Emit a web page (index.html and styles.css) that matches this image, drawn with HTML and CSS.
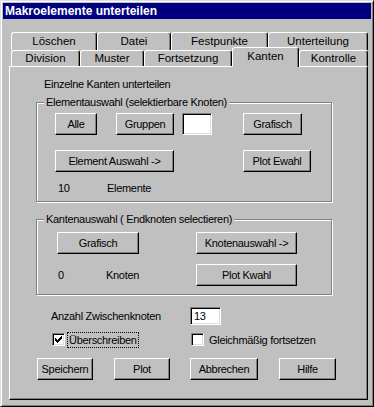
FILE: index.html
```html
<!DOCTYPE html>
<html lang="de">
<head>
    <meta charset="UTF-8">
    <meta name="viewport" content="width=device-width, initial-scale=1.0">
    <title>Makroelemente unterteilen</title>
    <link rel="stylesheet" href="styles.css">
</head>
<body>
    <div class="window">
        <div class="titlebar">Makroelemente unterteilen</div>

        <div class="tab-row back">
            <div class="tab t-loeschen">Löschen</div>
            <div class="tab t-datei">Datei</div>
            <div class="tab t-fest">Festpunkte</div>
            <div class="tab t-unter">Unterteilung</div>
        </div>
        <div class="tab-row front">
            <div class="tab t-division">Division</div>
            <div class="tab t-muster">Muster</div>
            <div class="tab t-fort">Fortsetzung</div>
            <div class="tab t-kanten active">Kanten</div>
            <div class="tab t-kontrolle">Kontrolle</div>
        </div>

        <div class="panel">
            <div class="heading">Einzelne Kanten unterteilen</div>

            <div class="group group-elem">
                <div class="legend">Elementauswahl (selektierbare Knoten)</div>
                <div class="row elem-a">
                    <button class="btn b-alle">Alle</button>
                    <button class="btn b-gruppen">Gruppen</button>
                    <div class="field f-gruppe"></div>
                    <button class="btn b-grafisch1">Grafisch</button>
                </div>
                <div class="row elem-b">
                    <button class="btn b-elemwahl">Element Auswahl -&gt;</button>
                    <button class="btn b-plotewahl">Plot Ewahl</button>
                </div>
                <div class="row elem-c">
                    <span class="count c-elem">10</span>
                    <span>Elemente</span>
                </div>
            </div>

            <div class="group group-kant">
                <div class="legend">Kantenauswahl ( Endknoten selectieren)</div>
                <div class="row kant-a">
                    <button class="btn b-grafisch2">Grafisch</button>
                    <button class="btn b-knotwahl">Knotenauswahl -&gt;</button>
                </div>
                <div class="row kant-b">
                    <span class="count c-knot">0</span>
                    <span class="knot-label">Knoten</span>
                    <button class="btn b-plotkwahl">Plot Kwahl</button>
                </div>
            </div>

            <div class="row anzahl">
                <span class="anzahl-label">Anzahl Zwischenknoten</span>
                <div class="field f-anzahl">13</div>
            </div>

            <div class="row checks">
                <div class="check-item first">
                    <span class="checkbox">
                        <svg width="7" height="7" viewBox="0 0 7 7"><path d="M0 2h1v3h-1z M1 3h1v3h-1z M2 4h1v3h-1z M3 3h1v3h-1z M4 2h1v3h-1z M5 1h1v3h-1z M6 0h1v3h-1z" fill="#000"/></svg>
                    </span>
                    <span class="check-label focused">Überschreiben</span>
                </div>
                <div class="check-item">
                    <span class="checkbox"></span>
                    <span class="check-label">Gleichmäßig fortsetzen</span>
                </div>
            </div>

            <div class="row actions">
                <button class="btn b-speichern">Speichern</button>
                <button class="btn b-plot">Plot</button>
                <button class="btn b-abbrechen">Abbrechen</button>
                <button class="btn b-hilfe">Hilfe</button>
            </div>
        </div>
    </div>
</body>
</html>
```

FILE: styles.css
```css
* {
    box-sizing: border-box;
}
body {
    margin: 0;
    background-color: #c0c0c0;
    font-family: "Liberation Sans", Arial, sans-serif;
    font-size: 11px;
    color: #000;
}
.window {
    width: 374px;
    height: 407px;
    padding: 2px;
    background-color: #c0c0c0;
    border: 1px solid;
    border-color: #dfdfdf #000 #000 #dfdfdf;
    box-shadow: inset 1px 1px 0 #fff, inset -1px -1px 0 #808080;
}
.titlebar {
    height: 16px;
    padding-left: 2px;
    background-color: #000080;
    color: #fff;
    font-weight: bold;
    font-size: 12px;
    line-height: 16px;
}

/* tabs */
.tab-row {
    display: flex;
    margin-left: 8px;
    position: relative;
    z-index: 1;
}
.tab-row.back {
    margin-top: 13px;
    height: 18px;
}
.tab-row.front {
    height: 16px;
    align-items: flex-end;
}
.tab {
    height: 100%;
    text-align: center;
    border-left: 1px solid #fff;
    border-top: 1px solid #fff;
    border-right: 1px solid #000;
    border-radius: 3px 3px 0 0;
    box-shadow: inset -1px 0 0 #808080;
    background-color: #c0c0c0;
    font-size: 11.5px;
    line-height: 16px;
}
.tab-row.front .tab {
    line-height: 15px;
}
.tab-row.front .tab.active {
    height: 20px;
    margin-bottom: -1px;
    padding-bottom: 2px;
    line-height: 17px;
}
.t-loeschen { width: 86px; }
.t-datei { width: 74px; }
.t-fest { width: 97px; }
.t-unter { width: 100px; }
.t-division { width: 69px; }
.t-muster { width: 64px; }
.t-fort { width: 88px; }
.t-kanten { width: 67px; }
.t-kontrolle { width: 69px; }

/* panel */
.panel {
    width: 359px;
    height: 334px;
    margin-left: 6px;
    padding-top: 10px;
    border: 1px solid;
    border-color: #fff #000 #000 #fff;
    box-shadow: inset -1px -1px 0 #808080;
    letter-spacing: -0.3px;
}
.heading {
    margin-left: 34px;
    line-height: 14px;
}
.group {
    width: 296px;
    margin-left: 26px;
    border: 1px solid #808080;
    box-shadow: inset 1px 1px 0 #fff, 1px 1px 0 #fff;
}
.group-elem {
    margin-top: 11px;
    height: 100px;
}
.group-kant {
    margin-top: 17px;
    height: 76px;
}
.legend {
    width: max-content;
    margin: -8px 0 0 7px;
    padding: 0 2px;
    line-height: 14px;
    background-color: #c0c0c0;
}
.row {
    display: flex;
    align-items: center;
}

/* buttons and fields */
.btn {
    height: 22px;
    padding: 0;
    font-family: inherit;
    font-size: 11px;
    letter-spacing: inherit;
    color: #000;
    background-color: #c0c0c0;
    border: 1px solid;
    border-color: #fff #000 #000 #fff;
    border-radius: 0;
    box-shadow: inset -1px -1px 0 #808080;
}
.field {
    background-color: #fff;
    border: 1px solid;
    border-color: #808080 #fff #fff #808080;
    box-shadow: inset 1px 1px 0 #000, inset -1px -1px 0 #dfdfdf;
}

.elem-a {
    margin-top: 4px;
    padding-left: 18px;
}
.b-alle { width: 42px; }
.b-gruppen { width: 58px; margin-left: 19px; }
.f-gruppe { width: 30px; height: 22px; margin-left: 8px; }
.b-grafisch1 { width: 59px; margin-left: 31px; }

.elem-b {
    margin-top: 15px;
    padding-left: 18px;
}
.b-elemwahl { width: 119px; }
.b-plotewahl { width: 68px; margin-left: 69px; }

.elem-c {
    margin-top: 9px;
    padding-left: 21px;
    line-height: 14px;
}
.c-elem { width: 49px; }

.kant-a {
    margin-top: 6px;
    padding-left: 20px;
}
.b-grafisch2 { width: 82px; }
.b-knotwahl { width: 101px; margin-left: 57px; }

.kant-b {
    margin-top: 10px;
    padding-left: 21px;
}
.c-knot { width: 48px; }
.knot-label { width: 90px; }
.b-plotkwahl { width: 101px; }

/* bottom area */
.anzahl {
    margin-top: 12px;
    padding-left: 41px;
}
.anzahl-label { width: 139px; }
.f-anzahl {
    width: 31px;
    height: 18px;
    padding-left: 3px;
    line-height: 16px;
}

.checks {
    margin-top: 8px;
    height: 13px;
    padding-left: 42px;
}
.check-item {
    display: flex;
    align-items: center;
}
.check-item.first { width: 139px; }
.checkbox {
    display: flex;
    align-items: center;
    justify-content: center;
    width: 13px;
    height: 13px;
    background-color: #fff;
    border: 1px solid;
    border-color: #808080 #fff #fff #808080;
    box-shadow: inset 1px 1px 0 #000, inset -1px -1px 0 #dfdfdf;
}
.check-label {
    margin-left: 5px;
    line-height: 14px;
}
.check-label.focused {
    margin-left: 3px;
    padding: 0 1px;
    outline: 1px dotted #000;
}

.actions {
    margin-top: 12px;
    padding-left: 27px;
}
.b-speichern { width: 56px; }
.b-plot { width: 56px; margin-left: 21px; }
.b-abbrechen { width: 68px; margin-left: 20px; }
.b-hilfe { width: 57px; margin-left: 21px; }
```
